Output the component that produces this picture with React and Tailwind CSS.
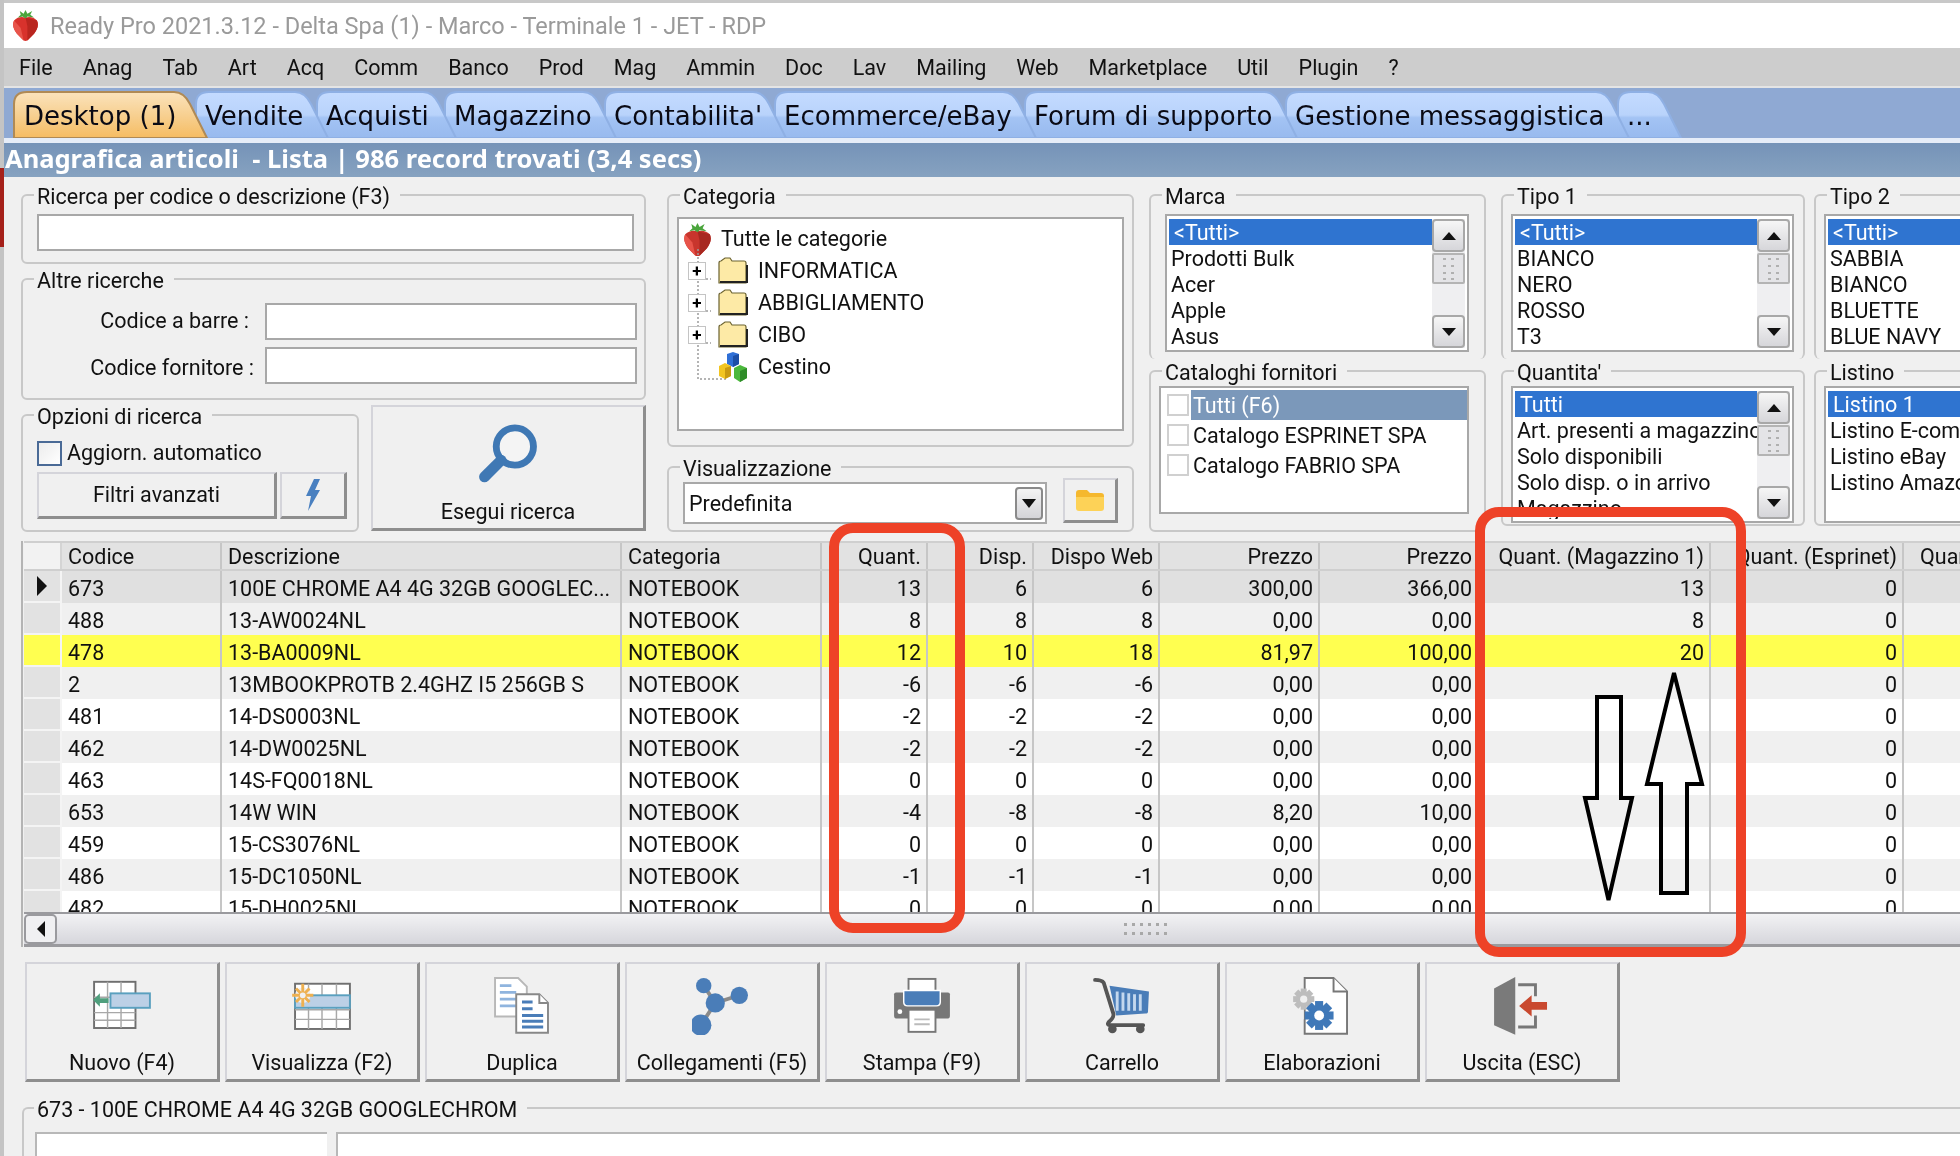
import React from 'react';

const menu = ['File', 'Anag', 'Tab', 'Art', 'Acq', 'Comm', 'Banco', 'Prod', 'Mag', 'Ammin', 'Doc', 'Lav', 'Mailing', 'Web', 'Marketplace', 'Util', 'Plugin', '?'];

const tabs = [
  { label: 'Desktop (1)', w: 195, box: 'w-[195px] z-[9]', active: true },
  { label: 'Vendite', w: 134, box: 'w-[134px] z-[8]' },
  { label: 'Acquisti', w: 141, box: 'w-[141px] z-[7]' },
  { label: 'Magazzino', w: 173, box: 'w-[173px] z-[6]' },
  { label: "Contabilita'", w: 183, box: 'w-[183px] z-[5]' },
  { label: 'Ecommerce/eBay', w: 263, box: 'w-[263px] z-[4]' },
  { label: 'Forum di supporto', w: 274, box: 'w-[274px] z-[3]' },
  { label: 'Gestione messaggistica', w: 345, box: 'w-[345px] z-[2]' },
  { label: '...', w: 65, box: 'w-[65px] z-[1]' },
];

const rows = [
  ['673', '100E CHROME A4 4G 32GB GOOGLEC...', 'NOTEBOOK', '13', '6', '6', '300,00', '366,00', '13', '0'],
  ['488', '13-AW0024NL', 'NOTEBOOK', '8', '8', '8', '0,00', '0,00', '8', '0'],
  ['478', '13-BA0009NL', 'NOTEBOOK', '12', '10', '18', '81,97', '100,00', '20', '0'],
  ['2', '13MBOOKPROTB 2.4GHZ I5 256GB S', 'NOTEBOOK', '-6', '-6', '-6', '0,00', '0,00', '', '0'],
  ['481', '14-DS0003NL', 'NOTEBOOK', '-2', '-2', '-2', '0,00', '0,00', '', '0'],
  ['462', '14-DW0025NL', 'NOTEBOOK', '-2', '-2', '-2', '0,00', '0,00', '', '0'],
  ['463', '14S-FQ0018NL', 'NOTEBOOK', '0', '0', '0', '0,00', '0,00', '', '0'],
  ['653', '14W WIN', 'NOTEBOOK', '-4', '-8', '-8', '8,20', '10,00', '', '0'],
  ['459', '15-CS3076NL', 'NOTEBOOK', '0', '0', '0', '0,00', '0,00', '', '0'],
  ['486', '15-DC1050NL', 'NOTEBOOK', '-1', '-1', '-1', '0,00', '0,00', '', '0'],
  ['482', '15-DH0025NL', 'NOTEBOOK', '0', '0', '0', '0,00', '0,00', '', '0'],
];

const rowTone = ['bg-[#e0e0e0]', 'bg-[#f0f0f0]', 'bg-[#ffff50]', 'bg-[#f0f0f0]', 'bg-white', 'bg-[#f0f0f0]', 'bg-white', 'bg-[#f0f0f0]', 'bg-white', 'bg-[#f0f0f0]', 'bg-white'];

const gridCols = 'grid grid-cols-[38px_160px_400px_200px_106px_106px_126px_160px_159px_232px_193px_80px]';
const cellL = 'flex items-center pl-[6px] pt-[5px] border-r-2 border-[#c6c6c6] whitespace-nowrap overflow-hidden';
const cellR = 'flex items-center justify-end pr-[5px] pt-[5px] border-r-2 border-[#c6c6c6] whitespace-nowrap overflow-hidden';

function Fieldset({ title, className, inner, children }) {
  return (
    <fieldset className={`min-w-0 border-2 border-[#c8c8c8] rounded-[6px] ${className}`}>
      <legend className="ml-[11px] pl-[3px] pr-[10px] h-[24px] leading-[28px] whitespace-nowrap">{title}</legend>
      <div className={inner}>{children}</div>
    </fieldset>
  );
}

function ScrollBtn({ up }) {
  return (
    <div className="h-[33px] flex items-center justify-center rounded-[4px] border-2 border-[#a8a8a8] bg-gradient-to-b from-[#f6f6f6] to-[#d6d6da]">
      <svg width="16" height="10" viewBox="0 0 16 10">
        <path d={up ? 'M8 1 L15 9 L1 9 Z' : 'M1 1 L15 1 L8 9 Z'} fill="#111" />
      </svg>
    </div>
  );
}

function ScrollY() {
  return (
    <div className="w-[33px] shrink-0 flex flex-col bg-[#efeff1]">
      <ScrollBtn up />
      <div className="h-[31px] mt-[1px] flex items-center justify-center rounded-[2px] border-2 border-[#b4b4b4] bg-[#e4e4e7]">
        <svg width="14" height="24" viewBox="0 0 14 24">
          {[2, 9, 16, 22].map((y) => (
            <g key={y} fill="#b0b0b0">
              <rect x="1" y={y - 1} width="3" height="2" />
              <rect x="9" y={y - 1} width="3" height="2" />
            </g>
          ))}
        </svg>
      </div>
      <div className="flex-1" />
      <ScrollBtn />
    </div>
  );
}

function ListBox({ items, className, cut }) {
  return (
    <div className={`bg-white border-2 border-[#a8a8a8] flex p-[2px] pt-[3px] overflow-hidden ${className}`}>
      <div className="flex-1 min-w-0 overflow-hidden">
        {items.map((t, i) => (
          <div key={t} className={`h-[26px] leading-[27px] whitespace-nowrap ${i === 0 ? 'bg-[#2f74d0] text-white pl-[5px]' : 'pl-[2px]'}`}>
            {t}
          </div>
        ))}
      </div>
      {!cut && <ScrollY />}
    </div>
  );
}

function Strawberry({ size = 28, tone = '#d8322c', dark = '#b9261f' }) {
  return (
    <svg width={size} height={size * 1.2} viewBox="0 0 28 34">
      <path d="M2 12 Q7 7 14 9 Q21 7 26 12 Q29 18 23 26 L16 33 Q14 34 12 33 L5 26 Q-1 18 2 12 Z" fill={tone} />
      <path d="M14 9 L26 12 Q29 18 23 26 L16 33 L16 18 Z" fill={dark} />
      <path d="M2 12 L9 20 L12 33 L5 26 Q-1 18 2 12 Z" fill="#e8544a" />
      <path d="M6 9 L9 6 L8 2 L12 5 L14 1 L16 5 L21 2 L19 6 L23 9 L16 8 L14 10 L11 8 Z" fill="#4aa53c" />
    </svg>
  );
}

function Folder() {
  return (
    <svg width="30" height="28" viewBox="0 0 30 28">
      <path d="M1 26 L1 6 Q1 4 3 4 L7 1 L12 1 L14 4 L26 4 Q28 4 28 6 L28 26 Z" fill="#fdeaa6" stroke="#6b6230" strokeWidth="1.2" />
      <path d="M2 25 L29 25 L29 8" fill="none" stroke="#222" strokeWidth="2" />
    </svg>
  );
}

function Cubes() {
  return (
    <svg width="30" height="30" viewBox="0 0 30 30">
      <path d="M9 2 L15 0 L21 2 L21 12 L15 15 L9 12 Z" fill="#2f6fd6" />
      <path d="M15 4 L21 2 L21 12 L15 15 Z" fill="#1c4ea6" />
      <path d="M1 14 L7 11 L13 14 L13 24 L7 27 L1 24 Z" fill="#f2c521" />
      <path d="M7 16 L13 14 L13 24 L7 27 Z" fill="#c99a10" />
      <path d="M16 16 L22 13 L29 16 L29 26 L22 30 L16 26 Z" fill="#4bb83c" />
      <path d="M22 19 L29 16 L29 26 L22 30 Z" fill="#2f8c28" />
    </svg>
  );
}

function Expander() {
  return (
    <div className="w-[18px] h-[18px] bg-white border border-[#c4c4c4] flex items-center justify-center font-bold text-[17px] leading-none text-black">+</div>
  );
}

function TreeRow({ label, icon, exp }) {
  return (
    <div className="h-[32px] flex items-center">
      <div className="w-[18px] flex justify-center ml-[9px]">{exp && <Expander />}</div>
      <div className="w-[30px] ml-[12px] flex justify-center">{icon}</div>
      <span className="ml-[10px]">{label}</span>
    </div>
  );
}

const btnRaised = 'flex flex-col items-center border-t-2 border-l-2 border-[#d4d4da] border-r-[3px] border-b-[3px] border-r-[#8e8e8e] border-b-[#8e8e8e] bg-[#f0f0f0]';

function IconNew() {
  return (
    <svg width="60" height="60" viewBox="0 0 60 60">
      <rect x="1" y="5" width="43" height="48" fill="#fff" stroke="#6f6f6f" strokeWidth="2" />
      <path d="M15 5 V53 M29 5 V53 M1 37 H44 M1 21 H18 M1 45 H44" stroke="#a8a8a8" strokeWidth="1.5" />
      <rect x="18" y="17" width="41" height="15" fill="#bcd0e6" stroke="#5aa0bf" strokeWidth="2" />
      <path d="M0 24 L7 17 L7 22 L16 22 L16 27 L7 27 L7 31 Z" fill="#4f9f7d" />
    </svg>
  );
}

function IconView() {
  return (
    <svg width="60" height="60" viewBox="0 0 60 60">
      <rect x="2" y="7" width="57" height="47" fill="#fff" stroke="#6f6f6f" strokeWidth="2" />
      <path d="M16 7 V54 M30 7 V54 M45 7 V54 M2 34 H59 M2 44 H59" stroke="#a8a8a8" strokeWidth="1.5" />
      <rect x="2" y="19" width="57" height="13" fill="#bcd0e6" stroke="#5aa0bf" strokeWidth="2" />
      <circle cx="10" cy="19" r="8" fill="#f0f0f0" />
      <path d="M10 7 V31 M-1 19 H21 M3 12 L17 26 M17 12 L3 26" stroke="#eeb050" strokeWidth="3" />
      <circle cx="10" cy="19" r="3" fill="#f0f0f0" />
    </svg>
  );
}

function IconDup() {
  return (
    <svg width="60" height="60" viewBox="0 0 60 60">
      <path d="M2 1 H26 L35 10 V41 H2 Z" fill="#fff" stroke="#b8b8b8" strokeWidth="2" />
      <path d="M7 9 H19 M7 16 H24 M7 23 H24 M7 30 H24" stroke="#8fb4de" strokeWidth="3" />
      <path d="M24 18 H48 L57 27 V58 H24 Z" fill="#fff" stroke="#888" strokeWidth="2" />
      <path d="M48 18 V27 H57" fill="#fff" stroke="#888" strokeWidth="2" />
      <path d="M30 26 H41 M30 33 H41 M30 40 H52 M30 46 H52 M30 52 H52" stroke="#4a7db8" strokeWidth="3" />
    </svg>
  );
}

function IconLinks() {
  return (
    <svg width="60" height="60" viewBox="0 0 60 60">
      <path d="M11 9 L23 27 L48 19 M23 27 L8 50" stroke="#8a8a8a" strokeWidth="4" fill="none" />
      <circle cx="11" cy="9" r="8" fill="#4a7db8" />
      <circle cx="48" cy="19" r="9" fill="#4a7db8" />
      <circle cx="23" cy="27" r="10" fill="#4a7db8" />
      <circle cx="8" cy="50" r="11" fill="#4a7db8" />
    </svg>
  );
}

function IconPrint() {
  return (
    <svg width="60" height="60" viewBox="0 0 60 60">
      <rect x="16" y="2" width="28" height="20" fill="#fff" stroke="#777" strokeWidth="2" />
      <path d="M3 16 H57 Q59 16 59 18 V40 Q59 43 57 43 H3 Q1 43 1 40 V18 Q1 16 3 16 Z" fill="#777" />
      <path d="M11 14 H49 V26 Q49 30 45 30 H15 Q11 30 11 26 Z" fill="#4a7db8" stroke="#fff" strokeWidth="1.5" />
      <circle cx="7" cy="36" r="2.5" fill="#fff" />
      <rect x="16" y="34" width="28" height="23" fill="#fff" stroke="#777" strokeWidth="2" />
      <path d="M22 44 H38 M22 49 H38" stroke="#bbb" strokeWidth="2" />
    </svg>
  );
}

function IconCart() {
  return (
    <svg width="60" height="60" viewBox="0 0 60 60">
      <path d="M17 9 L58 15 L57 36 Q57 38 54 38 L24 40 Z" fill="#4a7db8" />
      <path d="M25 15 V35 M31 16 V35 M37 17 V35 M43 18 V35 M49 18 V35" stroke="#c4d8ee" strokeWidth="3" />
      <path d="M2 3 Q9 3 11 6 L21 38 Q22 42 16 47 Q14 50 18 50 H52" fill="none" stroke="#555" strokeWidth="4" strokeLinecap="round" />
      <circle cx="20" cy="54" r="4.5" fill="#555" />
      <circle cx="49" cy="54" r="4.5" fill="#555" />
    </svg>
  );
}

function Gear({ cx, cy, r, fill, hole }) {
  const teeth = [0, 45, 90, 135];
  return (
    <g>
      {teeth.map((a) => (
        <rect key={a} x={cx - r * 0.28} y={cy - r} width={r * 0.56} height={r * 2} fill={fill} transform={`rotate(${a} ${cx} ${cy})`} />
      ))}
      <circle cx={cx} cy={cy} r={r * 0.72} fill={fill} />
      <circle cx={cx} cy={cy} r={r * 0.34} fill={hole} />
    </g>
  );
}

function IconProc() {
  return (
    <svg width="60" height="60" viewBox="0 0 60 60">
      <path d="M12 1 H42 L56 15 V59 H12 Z" fill="#fff" stroke="#777" strokeWidth="2" />
      <path d="M42 1 V15 H56" fill="#fff" stroke="#777" strokeWidth="2" />
      <rect x="0" y="12" width="11" height="32" fill="#f0f0f0" />
      <Gear cx={11} cy={23} r={11} fill="#bdbdbd" hole="#f0f0f0" />
      <Gear cx={27} cy={40} r={15} fill="#3f78b8" hole="#fff" />
    </svg>
  );
}

function IconExit() {
  return (
    <svg width="60" height="60" viewBox="0 0 60 60">
      <path d="M1 12 L23 0 V60 L1 50 Z" fill="#7a7a7a" />
      <path d="M26 8 H44 V20 M44 40 V52 H26" fill="none" stroke="#777" strokeWidth="3" />
      <path d="M27 30 L40 19 V26 H56 V34 H40 V41 Z" fill="#c9492f" />
    </svg>
  );
}

const bottomButtons = [
  { label: 'Nuovo (F4)', icon: <IconNew /> },
  { label: 'Visualizza (F2)', icon: <IconView /> },
  { label: 'Duplica', icon: <IconDup /> },
  { label: 'Collegamenti (F5)', icon: <IconLinks /> },
  { label: 'Stampa (F9)', icon: <IconPrint /> },
  { label: 'Carrello', icon: <IconCart /> },
  { label: 'Elaborazioni', icon: <IconProc /> },
  { label: 'Uscita (ESC)', icon: <IconExit /> },
];

function Tab({ tab }) {
  const w = tab.w;
  const d = `M1 48 L1 14 Q1 2 14 2 L${w - 34} 2 Q${w - 24} 2 ${w - 18} 14 L${w - 1} 48 Z`;
  const id = tab.active ? 'tabOn' : 'tabOff';
  return (
    <div className={`relative h-[48px] -ml-[13px] first:ml-0 shrink-0 ${tab.box}`}>
      <svg className="absolute inset-0" width={w} height="48" viewBox={`0 0 ${w} 48`}>
        <path d={d} fill={`url(#${id})`} stroke={tab.active ? '#b08a55' : '#8fb0e4'} strokeWidth="2" />
      </svg>
      <span className={`absolute top-[5px] h-[42px] leading-[42px] whitespace-nowrap ${tab.active ? 'left-[11px]' : 'left-[10px]'}`}>{tab.label}</span>
    </div>
  );
}

export default function App() {
  return (
    <div className="relative w-[1960px] h-[1156px] overflow-hidden bg-[#f0f0f0] text-[21.5px] text-[#111] font-['Roboto','Liberation_Sans',sans-serif] flex blur-[0.4px]">
      <svg width="0" height="0" className="absolute">
        <defs>
          <linearGradient id="tabOff" x1="0" y1="0" x2="0" y2="1">
            <stop offset="0" stopColor="#c4dbff" />
            <stop offset="0.5" stopColor="#b9d3fb" />
            <stop offset="0.56" stopColor="#a3c3f4" />
            <stop offset="1" stopColor="#98baee" />
          </linearGradient>
          <linearGradient id="tabOn" x1="0" y1="0" x2="0" y2="1">
            <stop offset="0" stopColor="#fbe3bc" />
            <stop offset="0.5" stopColor="#f7d091" />
            <stop offset="1" stopColor="#f6bc62" />
          </linearGradient>
        </defs>
      </svg>

      <div className="w-[4px] shrink-0 flex flex-col bg-[#c4c4c4]">
        <div className="h-[168px]" />
        <div className="h-[79px] bg-[#a52019]" />
      </div>

      <div className="flex-1 min-w-0 flex flex-col">
        <div className="h-[3px] bg-[#c8c8c8] shrink-0" />
        <div className="h-[45px] shrink-0 bg-white flex items-center pl-[8px]">
          <Strawberry size={27} />
          <span className="ml-[11px] pt-[2px] text-[23.5px] text-[#9a9a9a]">Ready Pro 2021.3.12 - Delta Spa (1) - Marco - Terminale 1 - JET - RDP</span>
        </div>
        <div className="h-[38px] shrink-0 bg-[#cdcdcd] flex items-center pl-[15px] pt-[3px] gap-[30px]">
          {menu.map((m) => (
            <span key={m}>{m}</span>
          ))}
        </div>
        <div className="h-[2px] shrink-0 bg-[#e4e4e4]" />
        <div className="h-[50px] shrink-0 bg-[#8fa9d3] flex items-end pl-[9px] text-[26px] text-[#0a0a14] font-['DejaVu_Sans',sans-serif]">
          {tabs.map((t) => (
            <Tab key={t.label} tab={t} />
          ))}
        </div>
        <div className="h-[5px] shrink-0 bg-[#e6edf8]" />
        <div className="h-[34px] shrink-0 bg-gradient-to-b from-[#7593b8] to-[#86a2c0] text-white font-bold text-[25.5px] font-['Noto_Sans',sans-serif] flex items-center pl-[1px] pb-[4px] whitespace-pre">
          Anagrafica articoli  - Lista | 986 record trovati (3,4 secs)
        </div>

        <div className="flex pl-[17px] pt-[6px] h-[355px] shrink-0">
          <div className="w-[625px] shrink-0 flex flex-col gap-[3px]">
            <Fieldset title="Ricerca per codice o descrizione (F3)" className="h-[81px]" inner="pl-[14px] pr-[10px] pt-[7px]">
              <div className="h-[37px] bg-white border-2 border-[#a8a8a8]" />
            </Fieldset>
            <Fieldset title="Altre ricerche" className="h-[133px]" inner="pl-[14px] pr-[7px] pt-[12px] flex flex-col gap-[7px]">
              <div className="h-[37px] flex items-center justify-end gap-[16px]">
                <span>Codice a barre :</span>
                <div className="w-[372px] h-[37px] bg-white border-2 border-[#a8a8a8]" />
              </div>
              <div className="h-[37px] flex items-center justify-end gap-[11px]">
                <span className="pt-[6px]">Codice fornitore :</span>
                <div className="w-[372px] h-[37px] bg-white border-2 border-[#a8a8a8]" />
              </div>
            </Fieldset>
            <div className="flex gap-[12px] h-[129px]">
              <Fieldset title="Opzioni di ricerca" className="w-[338px] shrink-0 h-[129px]" inner="pl-[14px] pr-[8px]">
                <div className="flex items-center h-[30px] mt-[11px]">
                  <div className="w-[25px] h-[25px] border-2 border-[#4a6a96] bg-gradient-to-br from-[#ececec] to-white" />
                  <span className="ml-[5px]">Aggiorn. automatico</span>
                </div>
                <div className="flex gap-[3px] mt-[4px] h-[47px]">
                  <div className={`${btnRaised} w-[240px] justify-center`}>Filtri avanzati</div>
                  <div className={`${btnRaised} w-[67px] justify-center`}>
                    <svg width="16" height="32" viewBox="0 0 16 32">
                      <path d="M9 0 L15 0 L10 11 L15 11 L3 32 L6 17 L1 17 Z" fill="#4a80c0" />
                    </svg>
                  </div>
                </div>
              </Fieldset>
              <div className={`${btnRaised} w-[275px] h-[126px] mt-[2px]`}>
                <svg className="mt-[17px]" width="62" height="62" viewBox="0 0 62 62">
                  <circle cx="38" cy="23" r="19" fill="#f4f4f4" stroke="#3f78b4" strokeWidth="7" />
                  <path d="M24 37 L7 54" stroke="#3f78b4" strokeWidth="11" strokeLinecap="round" />
                </svg>
                <span className="mt-[11px]">Esegui ricerca</span>
              </div>
            </div>
          </div>

          <div className="w-[467px] ml-[21px] shrink-0 flex flex-col gap-[8px]">
            <Fieldset title="Categoria" className="h-[264px]" inner="px-[8px] pt-[10px]">
              <div className="relative h-[214px] bg-white border-2 border-[#a8a8a8] pt-[4px]">
                <svg className="absolute left-[18px] top-[30px]" width="34" height="140" viewBox="0 0 34 140">
                  <path d="M1 0 V130 H30 M1 30 H14 M1 62 H14 M1 94 H14" stroke="#9c9c9c" strokeWidth="1.5" strokeDasharray="2 2" fill="none" />
                </svg>
                <div className="h-[32px] flex items-center pl-[4px]">
                  <Strawberry size={29} tone="#c8352d" dark="#a82820" />
                  <span className="ml-[9px]">Tutte le categorie</span>
                </div>
                <div className="relative">
                  <TreeRow label="INFORMATICA" icon={<Folder />} exp />
                  <TreeRow label="ABBIGLIAMENTO" icon={<Folder />} exp />
                  <TreeRow label="CIBO" icon={<Folder />} exp />
                  <TreeRow label="Cestino" icon={<Cubes />} />
                </div>
              </div>
            </Fieldset>
            <Fieldset title="Visualizzazione" className="h-[77px]" inner="pl-[14px] pr-[14px] flex items-start gap-[16px] pt-[3px]">
              <div className="w-[364px] h-[42px] bg-white border-2 border-[#a8a8a8] flex items-center justify-between pl-[4px] pr-[2px]">
                <span className="pt-[2px]">Predefinita</span>
                <div className="w-[28px] h-[33px] rounded-[4px] border-2 border-[#8a8a8a] bg-gradient-to-b from-[#f4f4f4] to-[#d4d4d8] flex items-center justify-center">
                  <svg width="14" height="9" viewBox="0 0 14 9"><path d="M0 0 H14 L7 9 Z" fill="#111" /></svg>
                </div>
              </div>
              <div className={`${btnRaised} w-[55px] h-[45px] -mt-[4px] justify-center`}>
                <svg width="32" height="24" viewBox="0 0 32 24">
                  <path d="M2 20 L2 5 Q2 2 5 2 L13 2 L16 5 L27 5 Q30 5 30 8 L30 20 Z" fill="#f5b82e" />
                  <path d="M2 9 H30 V20 Q30 23 27 23 H5 Q2 23 2 20 Z" fill="#fdd257" />
                </svg>
              </div>
            </Fieldset>
          </div>

          <div className="w-[337px] ml-[15px] shrink-0 flex flex-col">
            <Fieldset title="Marca" className="h-[176px] border-b-0" inner="pl-[14px] pr-[15px] pt-[7px]">
              <ListBox className="h-[138px]" items={['<Tutti>', 'Prodotti Bulk', 'Acer', 'Apple', 'Asus']} />
            </Fieldset>
            <Fieldset title="Cataloghi fornitori" className="h-[173px]" inner="pl-[8px] pr-[15px] pt-[3px]">
              <div className="h-[128px] bg-white border-2 border-[#a8a8a8] pt-[2px]">
                {['Tutti (F6)', 'Catalogo ESPRINET SPA', 'Catalogo FABRIO SPA'].map((c, i) => (
                  <div key={c} className="h-[30px] flex items-center pl-[6px]">
                    <div className="w-[22px] h-[22px] shrink-0 border-2 border-[#d0d0d0] bg-white" />
                    <span className={`ml-[2px] flex-1 h-[30px] leading-[31px] pl-[2px] whitespace-nowrap ${i === 0 ? 'bg-[#7b98ba] text-white' : ''}`}>{c}</span>
                  </div>
                ))}
              </div>
            </Fieldset>
          </div>

          <div className="w-[304px] ml-[15px] shrink-0 flex flex-col">
            <Fieldset title="Tipo 1" className="h-[176px] border-b-0" inner="pl-[8px] pr-[9px] pt-[7px]">
              <ListBox className="h-[138px]" items={['<Tutti>', 'BIANCO', 'NERO', 'ROSSO', 'T3']} />
            </Fieldset>
            <Fieldset title="Quantita'" className="h-[167px]" inner="pl-[8px] pr-[9px] pt-[3px]">
              <ListBox className="h-[137px]" items={['Tutti', 'Art. presenti a magazzino', 'Solo disponibili', 'Solo disp. o in arrivo', 'Magazzino']} />
            </Fieldset>
          </div>

          <div className="w-[300px] ml-[9px] shrink-0 flex flex-col">
            <Fieldset title="Tipo 2" className="h-[176px] border-b-0" inner="pl-[8px] pt-[7px]">
              <ListBox className="h-[138px]" cut items={['<Tutti>', 'SABBIA', 'BIANCO', 'BLUETTE', 'BLUE NAVY']} />
            </Fieldset>
            <Fieldset title="Listino" className="h-[167px]" inner="pl-[8px] pt-[3px]">
              <ListBox className="h-[137px]" cut items={['Listino 1', 'Listino E-commerce', 'Listino eBay', 'Listino Amazon']} />
            </Fieldset>
          </div>
        </div>

        <div className="ml-[17px] mt-[9px] shrink-0 border-l-2 border-[#b4b4b4] pl-[1px]">
          <div className="h-[371px] overflow-hidden">
            <div className={`${gridCols} h-[30px] bg-[#e2e2e2] border-t-2 border-b-2 border-[#cfcfcf]`}>
              <div className="bg-[#f2f2f2] border-r-2 border-[#d4d4d4]" />
              <div className={`${cellL} !pt-[2px]`}>Codice</div>
              <div className={`${cellL} !pt-[2px]`}>Descrizione</div>
              <div className={`${cellL} !pt-[2px]`}>Categoria</div>
              <div className={`${cellR} !pt-[2px]`}>Quant.</div>
              <div className={`${cellR} !pt-[2px]`}>Disp.</div>
              <div className={`${cellR} !pt-[2px]`}>Dispo Web</div>
              <div className={`${cellR} !pt-[2px]`}>Prezzo</div>
              <div className={`${cellR} !pt-[2px]`}>Prezzo</div>
              <div className={`${cellR} !pt-[2px]`}>Quant. (Magazzino 1)</div>
              <div className={`${cellR} !pt-[2px]`}>Quant. (Esprinet)</div>
              <div className={`${cellL} !pt-[2px]`}><span className="ml-[10px]">Quant.</span></div>
            </div>
            {rows.map((r, i) => (
              <div key={r[0]} className={`${gridCols} h-[32px] ${rowTone[i]}`}>
                <div className={`flex items-center justify-center border-r-2 border-b-2 border-[#f4f4f4] ${i === 2 ? 'bg-[#ffff50]' : 'bg-[#e2e2e2]'}`}>
                  {i === 0 && <svg width="12" height="20" viewBox="0 0 12 20"><path d="M1 0 L11 10 L1 20 Z" fill="#111" /></svg>}
                </div>
                <div className={cellL}>{r[0]}</div>
                <div className={cellL}>{r[1]}</div>
                <div className={cellL}>{r[2]}</div>
                <div className={cellR}>{r[3]}</div>
                <div className={cellR}>{r[4]}</div>
                <div className={cellR}>{r[5]}</div>
                <div className={cellR}>{r[6]}</div>
                <div className={cellR}>{r[7]}</div>
                <div className={cellR}>{r[8]}</div>
                <div className={cellR}>{r[9]}</div>
                <div />
              </div>
            ))}
          </div>
          <div className="h-[35px] flex border-t-2 border-b-[3px] border-[#9a9a9e] bg-gradient-to-b from-[#f2f2f4] to-[#d6d6dc]">
            <div className="w-[33px] shrink-0 border-2 border-[#9a9a9e] rounded-[5px] flex items-center justify-center bg-[#f0f0f2]">
              <svg width="10" height="16" viewBox="0 0 10 16"><path d="M9 0 V16 L1 8 Z" fill="#111" /></svg>
            </div>
            <div className="flex-1 flex items-center pl-[1065px]">
              <svg width="46" height="14" viewBox="0 0 46 14">
                {[2, 10, 18, 26, 34, 42].map((x) => (
                  <g key={x} fill="#a8a8a8">
                    <rect x={x} y="1" width="3" height="3" />
                    <rect x={x} y="10" width="3" height="3" />
                  </g>
                ))}
              </svg>
            </div>
          </div>
        </div>

        <div className="flex gap-[5px] ml-[21px] mt-[15px] shrink-0">
          {bottomButtons.map((b) => (
            <div key={b.label} className={`${btnRaised} w-[195px] h-[120px] pt-[13px]`}>
              {b.icon}
              <span className="mt-[12px]">{b.label}</span>
            </div>
          ))}
        </div>

        <fieldset className="min-w-0 ml-[18px] mt-[14px] border-2 border-r-0 border-b-0 border-[#c8c8c8] rounded-tl-[6px] flex-1">
          <legend className="ml-[10px] pl-[3px] pr-[10px] h-[24px] leading-[28px] whitespace-nowrap">673 - 100E CHROME A4 4G 32GB GOOGLECHROM</legend>
          <div className="flex gap-[9px] mt-[12px] h-[40px] pl-[11px]">
            <div className="w-[292px] shrink-0 bg-white border-t-2 border-l-2 border-[#b8b8b8]" />
            <div className="flex-1 bg-white border-t-2 border-l-2 border-[#b8b8b8]" />
          </div>
        </fieldset>
      </div>

      {/* annotazioni rosse sopra la griglia */}
      <div className="absolute left-[829px] top-[523px] w-[136px] h-[410px] border-[10px] border-[#ee4227] rounded-[24px]" />
      <div className="absolute left-[1475px] top-[507px] w-[271px] h-[450px] border-[10px] border-[#ee4227] rounded-[24px]" />
      <svg className="absolute left-0 top-0" width="1960" height="1156" viewBox="0 0 1960 1156" fill="none" stroke="#000" strokeWidth="4">
        <path d="M1597 697 H1621 V798 H1632 L1608.5 900 L1585 798 H1597 Z" />
        <path d="M1674 673 L1702 784 H1687 V893 H1661 V784 H1647 Z" />
      </svg>
    </div>
  );
}
